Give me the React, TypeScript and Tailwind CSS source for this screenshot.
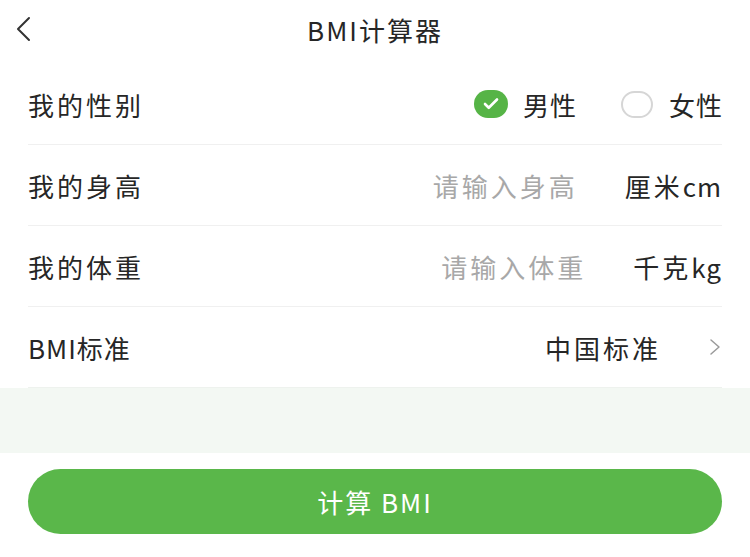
import { Check } from 'lucide-react'

const font = { fontFamily: '"Noto Sans CJK SC", "Noto Sans", sans-serif' }

function Row({ children, last }: { children: React.ReactNode; last?: boolean }) {
  return (
    <div className={`flex h-[81px] items-center justify-between border-b ${last ? 'border-[#eef2ee]' : 'border-[#f0f0f0]'}`}>
      {children}
    </div>
  )
}

export default function App() {
  return (
    <div style={font} className="flex h-[557px] w-[750px] flex-col bg-white text-[#262626]">
      <header className="relative flex h-[64px] items-start justify-center pt-[10px]">
        <button className="absolute left-[14px] top-[16px]">
          <svg width="20" height="26" viewBox="0 0 20 26" fill="none">
            <path d="M15 2 L4 13 L15 24" stroke="#333" strokeWidth="2" strokeLinecap="round" strokeLinejoin="round" />
          </svg>
        </button>
        <h1 className="text-[26px] font-normal tracking-[2px]">BMI计算器</h1>
      </header>

      <div className="px-[28px] text-[26px] tracking-[3px]">
        <Row>
          <span>我的性别</span>
          <div className="flex items-center tracking-[1px]">
            <span className="flex h-[28px] w-[34px] items-center justify-center rounded-full bg-[#56b446]">
              <Check className="h-[18px] w-[20px] text-white" strokeWidth={3.5} />
            </span>
            <span className="ml-[15px]">男性</span>
            <span className="ml-[44px] h-[27px] w-[32px] rounded-full border-2 border-[#d6d6d6]" />
            <span className="ml-[16px] -mr-[1px]">女性</span>
          </div>
        </Row>
        <Row>
          <span>我的身高</span>
          <div className="flex items-center">
            <span className="text-[#a8a8a8]">请输入身高</span>
            <span className="ml-[47px]">厘米<span className="tracking-[1px]">cm</span></span>
          </div>
        </Row>
        <Row>
          <span>我的体重</span>
          <div className="flex items-center">
            <span className="text-[#a8a8a8]">请输入体重</span>
            <span className="ml-[47px]">千克<span className="tracking-[1px]">kg</span></span>
          </div>
        </Row>
        <Row last>
          <span className="tracking-[1px]">BMI标准</span>
          <div className="flex items-center">
            <span>中国标准</span>
            <svg className="ml-[48px] mr-[1px]" width="12" height="18" viewBox="0 0 12 18" fill="none">
              <path d="M2 2 L10 9 L2 16" stroke="#9a9a9a" strokeWidth="1.5" strokeLinecap="round" strokeLinejoin="round" />
            </svg>
          </div>
        </Row>
      </div>

      <div className="h-[65px] bg-[#f3f8f3]" />

      <div className="px-[28px] pt-[16px]">
        <button className="flex h-[65px] w-full items-center justify-center rounded-full bg-[#5ab74a] text-[26px] tracking-[2px] text-white">
          计算 BMI
        </button>
      </div>
    </div>
  )
}
